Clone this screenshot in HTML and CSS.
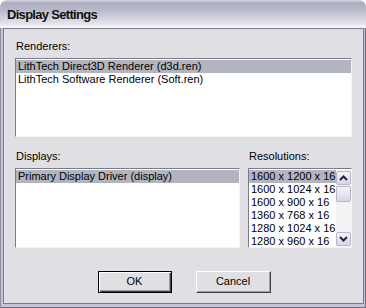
FILE: index.html
```html
<!DOCTYPE html>
<html>
<head>
<meta charset="utf-8">
<link rel="stylesheet" href="styles.css">
</head>
<body>
<div class="window">
  <div class="titlebar">Display Settings</div>
  <div class="frame">
    <div class="client">
      <div class="label">Renderers:</div>
      <div class="listbox renderers">
        <div class="item sel">LithTech Direct3D Renderer (d3d.ren)</div>
        <div class="item">LithTech Software Renderer (Soft.ren)</div>
      </div>
      <div class="lower">
        <div class="col">
          <div class="label">Displays:</div>
          <div class="listbox displays">
            <div class="item sel">Primary Display Driver (display)</div>
          </div>
        </div>
        <div class="col">
          <div class="label">Resolutions:</div>
          <div class="listbox res">
            <div class="items">
              <div class="item sel">1600 x 1200 x 16</div>
              <div class="item">1600 x 1024 x 16</div>
              <div class="item">1600 x 900 x 16</div>
              <div class="item">1360 x 768 x 16</div>
              <div class="item">1280 x 1024 x 16</div>
              <div class="item">1280 x 960 x 16</div>
            </div>
            <div class="scrollbar">
              <div class="sbtn"><svg width="9" height="6" viewBox="0 0 9 6"><polyline points="1,5 4.5,1.5 8,5" fill="none" stroke="#22263e" stroke-width="2"/></svg></div>
              <div class="thumb"></div>
              <div class="track"></div>
              <div class="sbtn"><svg width="9" height="6" viewBox="0 0 9 6"><polyline points="1,1 4.5,4.5 8,1" fill="none" stroke="#22263e" stroke-width="2"/></svg></div>
            </div>
          </div>
        </div>
      </div>
      <div class="buttons">
        <div class="btn default">OK</div>
        <div class="btn">Cancel</div>
      </div>
    </div>
  </div>
</div>
</body>
</html>
```

FILE: styles.css
```css
html, body {
  margin: 0;
  padding: 0;
  background: #ffffff;
}
body {
  width: 366px;
  height: 308px;
  overflow: hidden;
  font-family: "Liberation Sans", Arial, sans-serif;
  font-size: 11px;
  color: #000;
}
.window {
  width: 366px;
  height: 308px;
  display: flex;
  flex-direction: column;
}
.titlebar {
  height: 28px;
  line-height: 29px;
  padding-left: 7px;
  font-weight: bold;
  font-size: 13px;
  letter-spacing: -0.7px;
  color: #111;
  border-radius: 7px 7px 0 0;
  background: linear-gradient(#d6d6e2 0px, #acacc0 3px, #b6b6c8 9px, #d2d2de 18px, #e4e4ec 24px, #f6f6fa 27px, #f6f6fa 28px);
}
.frame {
  flex: 1;
  display: flex;
  background: #c6c6d2;
  border-left: 1px solid #8e8ea0;
  border-right: 1px solid #6e6e80;
  border-bottom: 1px solid #6e6e80;
  padding: 0 1px 3px 2px;
}
.client {
  flex: 1;
  background: #e0dfe3;
  border: 1px solid #7a7a88;
  padding: 11px 11px 10px 11px;
  display: flex;
  flex-direction: column;
}
.label {
  height: 13px;
  line-height: 13px;
  margin-bottom: 5px;
  padding-left: 1px;
  white-space: nowrap;
}
.listbox {
  box-sizing: border-box;
  background: #fff;
  border: 1px solid;
  border-color: #7c7c88 #f4f4f6 #f4f4f6 #7c7c88;
  padding: 1px 0 0 0;
  overflow: hidden;
}
.renderers {
  height: 79px;
}
.item {
  height: 13px;
  line-height: 13px;
  padding-left: 2px;
  white-space: nowrap;
  overflow: hidden;
}
.item.sel {
  background: #b2b4bf;
}
.lower {
  margin-top: 13px;
  display: grid;
  grid-template-columns: 225px 104px;
  column-gap: 8px;
}
.displays, .res {
  height: 80px;
}
.res {
  display: flex;
}
.items {
  flex: 1;
  min-width: 0;
}
.scrollbar {
  width: 15px;
  display: flex;
  flex-direction: column;
  background: #f3f3f6;
  padding: 1px 0 1px 0;
}
.sbtn, .thumb {
  box-sizing: border-box;
  width: 15px;
  border: 1px solid #b8b8c8;
  border-radius: 2px;
  background: linear-gradient(#f4f4f8, #d6d6e2);
}
.sbtn {
  height: 14px;
  display: flex;
  align-items: center;
  justify-content: center;
}
.thumb {
  height: 16px;
  margin-top: 1px;
}
.track {
  flex: 1;
}
.buttons {
  margin-top: 23px;
  display: flex;
  justify-content: center;
  gap: 24px;
  padding-left: 1px;
}
.btn {
  box-sizing: border-box;
  width: 75px;
  height: 22px;
  line-height: 18px;
  text-align: center;
  background: #e0dfe3;
  border: 1px solid;
  border-color: #ffffff #404048 #404048 #ffffff;
  box-shadow: inset -1px -1px 0 #9d9da1;
}
.btn.default {
  width: 74px;
  border: 1px solid #000;
  box-shadow: inset 1px 1px 0 #ffffff, inset -1px -1px 0 #404048, inset -2px -2px 0 #9d9da1;
}
```
